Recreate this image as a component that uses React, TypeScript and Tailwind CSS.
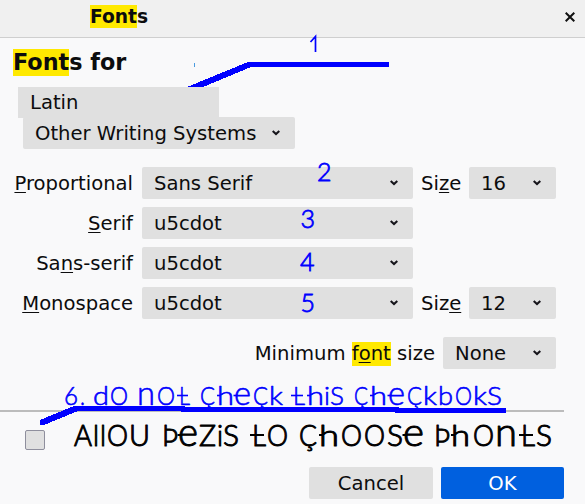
import React from "react";

function Chevron({ className = "" }: { className?: string }) {
  return (
    <svg className={`shrink-0 ${className}`} width="8" height="6" viewBox="0 0 8 6" fill="none">
      <path d="M0.7 1 L4 4.1 L7.3 1" stroke="#15141a" strokeWidth="2" />
    </svg>
  );
}

function Select({ value, className }: { value: string; className: string }) {
  return (
    <div className={`flex h-8 shrink-0 items-center justify-between rounded-[2px] bg-[#e0e0e0] pl-3 pr-[15px] ${className}`}>
      <span className="pt-0.5">{value}</span>
      <Chevron />
    </div>
  );
}

function Key({ children }: { children: React.ReactNode }) {
  return <span className="underline decoration-1 underline-offset-2">{children}</span>;
}

function FontRow({ label, value, size }: { label: React.ReactNode; value: string; size?: React.ReactNode }) {
  return (
    <div className="flex h-8 items-center">
      <div className="w-[133px] shrink-0 pt-0.5 text-right">{label}</div>
      <Select value={value} className="ml-[9px] w-[271px]" />
      {size}
    </div>
  );
}

type Glyph = [string, number, number];

// Hand-lettered lines: each entry is a character, its left edge and its width.
// The letters e, h and L carry a crossbar that pokes out to the left of the stem.
function Lettering({ glyphs, baseline, bar, size, color, weight }: { glyphs: Glyph[]; baseline: number; bar: number; size: number; color: string; weight: number }) {
  return (
    <g>
      <text y={baseline} fontSize={size} fill={color} stroke={color} strokeWidth={weight} strokeLinejoin="round" fontFamily="Lato, sans-serif" fontWeight={300}>
        {glyphs.map(([ch, x, w], i) => (
          <tspan key={i} x={x} textLength={w} lengthAdjust="spacingAndGlyphs" fontSize={ch === "e" || ch === "n" ? size * 1.35 : size}>
            {ch}
          </tspan>
        ))}
      </text>
      {glyphs.map(([ch, x, w], i) => {
        if (ch === "L") return <path key={i} d={`M${x - 2} ${bar}H${x + w - 2}`} stroke={color} strokeWidth={1 + weight} />;
        if (ch === "h") return <path key={i} d={`M${x} ${bar}H${x + 4}`} stroke={color} strokeWidth={1 + weight} />;
        if (ch === "e") return <path key={i} d={`M${x - 0.5} ${bar}H${x + 4}`} stroke={color} strokeWidth={1 + weight} />;
        return null;
      })}
    </g>
  );
}

const allow: Glyph[] = [
  ["A", 74, 18], ["l", 93, 6], ["l", 100, 6], ["O", 107, 21], ["U", 129, 21],
  ["Þ", 162, 16], ["e", 178, 20], ["Z", 199, 17], ["i", 217, 6], ["S", 223, 16],
  ["L", 252, 14], ["O", 267, 21],
  ["Ç", 299, 18], ["h", 319, 20], ["O", 341, 21], ["O", 364, 21], ["S", 387, 16], ["e", 403, 21],
  ["Þ", 434, 16], ["h", 451, 19], ["O", 473, 21], ["n", 495, 22], ["L", 521, 14], ["S", 536, 16],
];

const warning: Glyph[] = [
  ["6", 64, 14], [".", 80, 5], ["d", 93, 16], ["O", 110, 18],
  ["n", 137, 18], ["O", 157, 18], ["L", 179, 11],
  ["Ç", 200, 15], ["h", 217, 17], ["e", 234, 17], ["Ç", 253, 15], ["k", 269, 14],
  ["L", 293, 12], ["h", 307, 17], ["i", 324, 6], ["S", 330, 14],
  ["Ç", 354, 14], ["h", 370, 17], ["e", 388, 17], ["Ç", 407, 15], ["k", 423, 14], ["b", 438, 15], ["O", 455, 17], ["k", 473, 14], ["S", 487, 15],
];

export default function App() {
  return (
    <div className="relative h-[504px] w-[585px] overflow-hidden bg-[#f9f9fa] font-['DejaVu_Sans',sans-serif] text-[19.6px] leading-8 text-[#0c0c0d]">
      <header className="flex h-[38px] items-center justify-between border-b border-[#cfcfcf] bg-[#f0f0f0] pb-1 pl-[90px] pr-[10px]">
        <h1 className="text-[18.67px] font-bold leading-[23px]"><span className="inline-block bg-[#ffe900]">Font</span>s</h1>
        <svg width="10" height="10" viewBox="0 0 10 10" stroke="#111" strokeWidth="2"><path d="M0.7 0.7 L9.3 9.3 M9.3 0.7 L0.7 9.3" /></svg>
      </header>

      <h2 className="ml-[13px] mt-[11px] h-[27px] text-[22.3px] font-bold leading-[27px]"><span className="inline-block bg-[#ffe900]">Font</span>s for</h2>
      <div className="ml-[18px] mt-[11px] h-[31px] w-[201px] bg-[#e0e0e0] pl-3 leading-[31px]">Latin</div>
      <Select value="Other Writing Systems" className="-mt-px ml-[23px] w-[272px]" />

      <main className="mt-[18px] flex flex-col gap-2">
        <FontRow
          label={<><Key>P</Key>roportional</>}
          value="Sans Serif"
          size={<><span className="ml-2 w-12 pt-0.5">Si<Key>z</Key>e</span><Select value="16" className="w-[87px]" /></>}
        />
        <FontRow label={<><Key>S</Key>erif</>} value="u5cdot" />
        <FontRow label={<>Sa<Key>n</Key>s-serif</>} value="u5cdot" />
        <FontRow
          label={<><Key>M</Key>onospace</>}
          value="u5cdot"
          size={<><span className="ml-2 w-12 pt-0.5">Siz<Key>e</Key></span><Select value="12" className="w-[87px]" /></>}
        />
      </main>

      <div className="mr-[29px] mt-[18px] flex h-8 items-center justify-end gap-2">
        <span className="pt-0.5">Minimum <span className="inline-block bg-[#ffe900] leading-6">f<Key>o</Key>nt</span> size</span>
        <Select value="None" className="w-[113px]" />
      </div>

      <div className="mt-[41px] h-0.5 w-[564px] bg-[#bcbcbc]" />
      <div className="ml-[25px] mt-[18px] size-5 rounded-[2px] border border-[#8f8f9d] bg-[#e0e0e0]" />
      <footer className="mr-[21px] mt-[17px] flex justify-end gap-2">
        <button className="h-8 w-[124px] rounded-[2px] bg-[#e0e0e0] pt-px">Cancel</button>
        <button className="h-8 w-[123px] rounded-[2px] bg-[#0060df] pt-px text-white">OK</button>
      </footer>

      <svg className="pointer-events-none absolute left-0 top-0" width="585" height="504" viewBox="0 0 585 504">
        <path d="M194.5 63V67" stroke="#4a9be0" />
        <path d="M187 87 L248 62 H389 V67 H251 L203 87 Z" fill="#00f" shapeRendering="crispEdges" />
        <g fontFamily="Lato, sans-serif" fontSize="25" fontWeight="300" fill="#00f" stroke="#00f" strokeWidth="0.8">
          <path d="M310.5 42 L315.5 36.5 V52" fill="none" strokeWidth="1.7" />
          <text x="317" y="181">2</text>
          <text x="300.5" y="228">3</text>
          <text x="300" y="271">4</text>
          <text x="300.5" y="312">5</text>
        </g>
        <Lettering glyphs={warning} baseline={405} bar={395.5} size={25} color="#0000ff" weight={0.6} />
        <Lettering glyphs={allow} baseline={446} bar={435} size={28.5} color="#000000" weight={1} />
        <path d="M40 420 L74 406 H185 V407 H399 V408 H506 V413 H395 V412 H181 V411 H78 L44 425 H40 Z" fill="#00f" shapeRendering="crispEdges" />
      </svg>
    </div>
  );
}
